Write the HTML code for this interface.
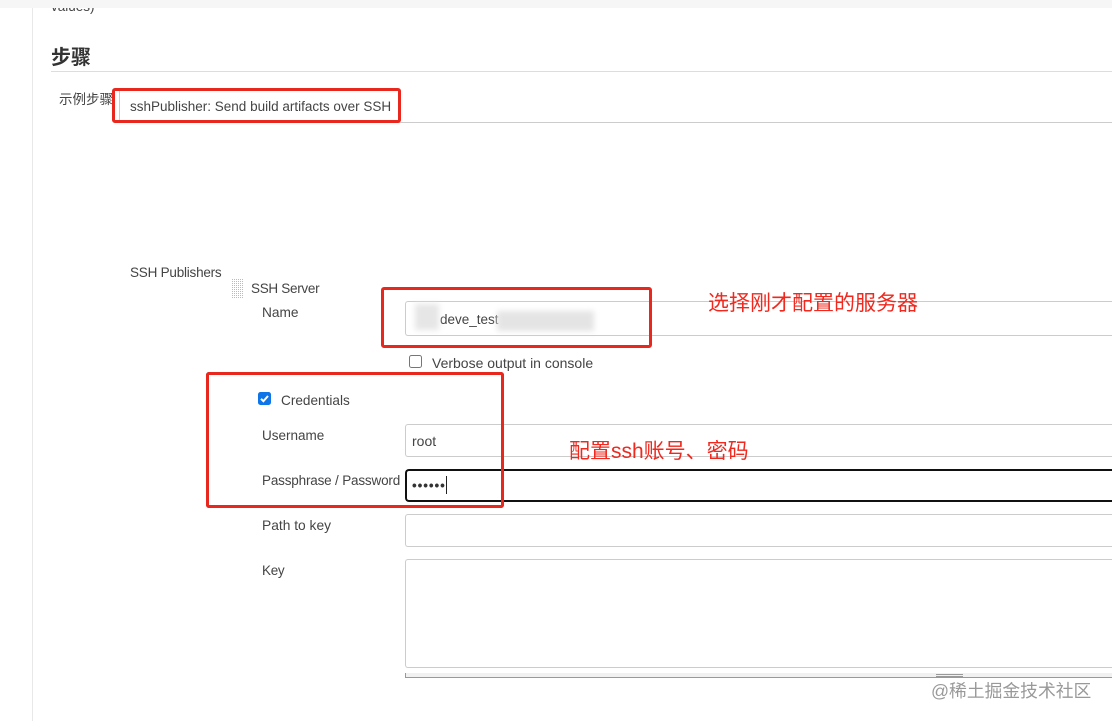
<!DOCTYPE html>
<html><head><meta charset="utf-8"><style>
html,body{margin:0;padding:0;background:#fff}
#p{position:relative;width:1112px;height:721px;overflow:hidden;background:#fff;font-family:"Liberation Sans","Noto Sans CJK SC",sans-serif;font-size:13.5px;color:#444}
#p div{position:absolute;box-sizing:border-box;white-space:nowrap}
.t{line-height:18px}
.i{background:#fff;border:1px solid #ccc;border-right:0;border-radius:3px 0 0 3px;left:405px;width:720px}
.r{border:3px solid #e8281e;border-radius:3px}
.a{color:#f0281e;font-size:21px;line-height:26px}
</style></head><body><div id="p">
<div style="left:0;top:0;width:1112px;height:8px;background:#f6f6f6"></div>
<div style="left:32px;top:8px;width:1px;height:713px;background:#e8e8e8"></div>
<div style="left:51px;top:8px;width:70px;height:6px;overflow:hidden"><div class="t" style="left:0;top:-10px">values)</div></div>
<div style="left:51px;top:45px;font-size:20px;font-weight:bold;line-height:26px;color:#333">步骤</div>
<div style="left:51px;top:71px;width:1061px;height:1px;background:#ddd"></div>
<div class="t" style="left:59px;top:91px;width:54px;overflow:hidden">示例步骤</div>
<div style="left:119px;top:90px;width:1px;height:32px;background:#ccc"></div>
<div style="left:119px;top:122px;width:993px;height:1px;background:#ccc"></div>
<div class="t" style="left:130px;top:98px">sshPublisher: Send build artifacts over SSH</div>
<div class="r" style="left:112px;top:88px;width:289px;height:35px"></div>

<div class="t" style="left:130px;top:264px;letter-spacing:-.22px">SSH Publishers</div>
<div style="left:232px;top:278px;width:11px;height:20px;background:repeating-linear-gradient(0deg,#bbb 0 1px,#fff 1px 2px),repeating-linear-gradient(90deg,#bbb 0 1px,#fff 1px 2px);background-blend-mode:lighten"></div>
<div class="t" style="left:251px;top:280px;letter-spacing:-.3px">SSH Server</div>
<div class="t" style="left:262px;top:304px;font-size:13.7px">Name</div>
<div class="i" style="top:301px;height:35px"></div>
<div class="t" style="left:440px;top:311px">deve_test</div>
<div style="left:415px;top:304px;width:24px;height:26px;background:#e6e6e6;filter:blur(3px)"></div>
<div style="left:497px;top:311px;width:97px;height:20px;background:#e4e4e4;filter:blur(3px)"></div>
<div class="r" style="left:381px;top:287px;width:271px;height:61px"></div>
<div style="left:409px;top:355px;width:13px;height:13px;border:1px solid #767676;border-radius:2.5px;background:#fff"></div>
<div class="t" style="left:432px;top:354px;font-size:14px">Verbose output in console</div>
<div class="a" style="left:708px;top:291px">选择刚才配置的服务器</div>

<div class="r" style="left:206px;top:372px;width:298px;height:136px"></div>
<div style="left:258px;top:392px;width:13px;height:13px;border-radius:2.5px;background:#0d75e8"><svg width="13" height="13" viewBox="0 0 13 13" style="display:block"><path d="M3 6.8 5.4 9.2 10 4" fill="none" stroke="#fff" stroke-width="2"/></svg></div>
<div class="t" style="left:281px;top:392px;font-size:13.6px">Credentials</div>
<div class="t" style="left:262px;top:427px">Username</div>
<div class="i" style="top:424px;height:33px"></div>
<div class="t" style="left:412px;top:432px;font-size:14px">root</div>
<div class="t" style="left:262px;top:472px;letter-spacing:-.18px">Passphrase / Password</div>
<div class="i" style="top:469px;height:33px;border:2px solid #111;border-right:0;border-radius:4px 0 0 4px"></div>
<div class="t" style="left:412px;top:477px;font-weight:bold;letter-spacing:.9px;color:#333">••••••</div>
<div style="left:446px;top:476px;width:1px;height:18px;background:#222"></div>
<div class="a" style="left:569px;top:439px">配置ssh账号、密码</div>
<div class="r" style="left:206px;top:372px;width:298px;height:136px;background:none"></div>

<div class="t" style="left:262px;top:517px;font-size:13.8px">Path to key</div>
<div class="i" style="top:514px;height:33px"></div>
<div class="t" style="left:262px;top:562px;letter-spacing:-.3px">Key</div>
<div class="i" style="top:559px;height:109px"></div>
<div style="left:405px;top:673px;width:707px;height:5px;background:#f1f1f1;border-bottom:1px solid #999;border-left:1px solid #999"></div>
<div style="left:936px;top:674px;width:27px;height:3px;border-top:1px solid #999;border-bottom:1px solid #999"></div>
<div style="left:931px;top:679px;font-size:17.8px;line-height:24px;color:#999">@稀土掘金技术社区</div>
</div></body></html>
